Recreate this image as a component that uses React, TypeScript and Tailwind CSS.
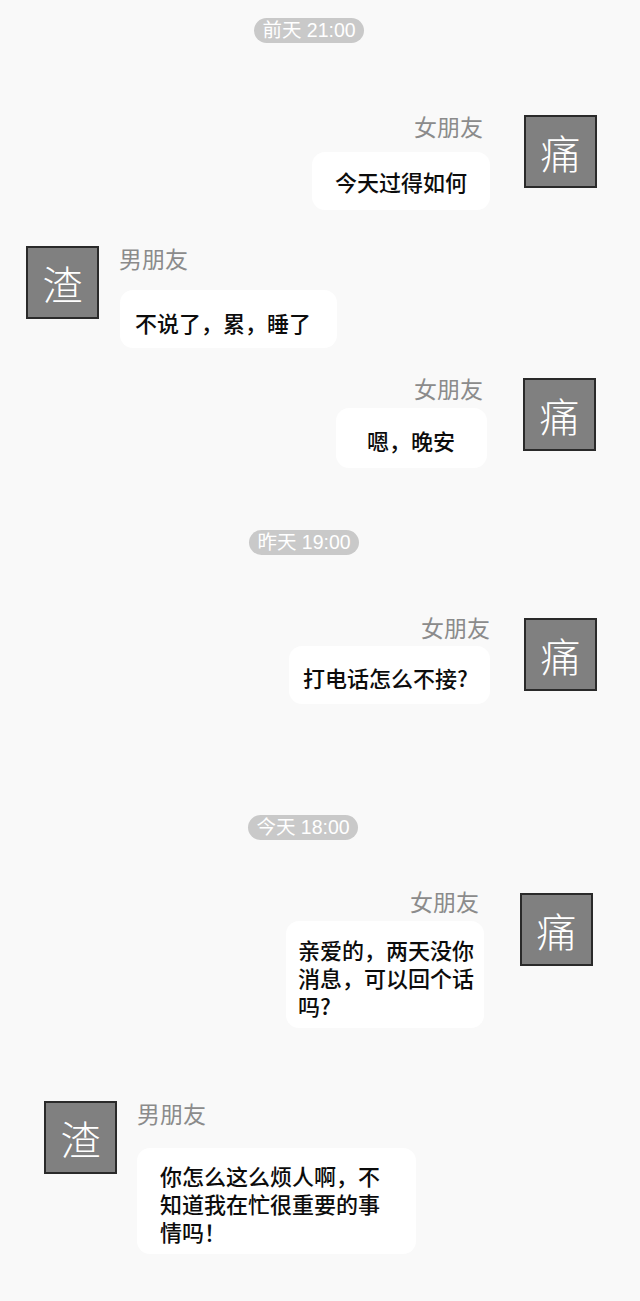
const cjk = "font-['Noto_Sans_CJK_SC','Noto_Sans',sans-serif]";

type MessageProps = {
  side: 'left' | 'right';
  name: string;
  lines: string[];
  rowClass: string;
  nameClass: string;
  bubbleClass: string;
};

function Pill({ label, className }: { label: string; className: string }) {
  return (
    <div
      className={`flex h-[25px] w-[110px] items-center justify-center rounded-full bg-[#c9c9c9] font-['Liberation_Sans','Noto_Sans_CJK_SC',sans-serif] text-[19.5px] leading-none text-white ${className}`}
    >
      {label}
    </div>
  );
}

function Avatar({ glyph }: { glyph: string }) {
  return (
    <div className="flex h-[73px] w-[73px] shrink-0 items-center justify-center border-2 border-[#2a2a2a] bg-[#808080] text-[40px] leading-none font-light text-white">
      {glyph}
    </div>
  );
}

function Message({ side, name, lines, rowClass, nameClass, bubbleClass }: MessageProps) {
  const right = side === 'right';
  return (
    <div className={`flex items-start ${right ? 'justify-end' : 'justify-start'} ${rowClass}`}>
      {!right && <Avatar glyph="渣" />}
      <div className={`flex flex-col ${right ? 'items-end' : 'items-start'}`}>
        <div className={`text-[23px] leading-[24px] text-[#8b8b8b] ${nameClass}`}>{name}</div>
        <div
          className={`flex flex-col justify-center rounded-[13px] bg-white text-[22px] leading-[28px] font-medium whitespace-nowrap text-[#0c0c0c] ${bubbleClass}`}
        >
          {lines.map((line) => (
            <div key={line}>{line}</div>
          ))}
        </div>
      </div>
      {right && <Avatar glyph="痛" />}
    </div>
  );
}

export default function App() {
  return (
    <div className={`flex h-[1301px] w-[640px] flex-col overflow-hidden bg-[#f9f9f9] ${cjk}`}>
      <Pill label="前天 21:00" className="mt-[18px] ml-[254px]" />

      <Message
        side="right"
        name="女朋友"
        lines={['今天过得如何']}
        rowClass="mt-[72px] mr-[43px]"
        nameClass="-mt-[1px] mr-[41px]"
        bubbleClass="mt-[14px] mr-[34px] h-[58px] w-[178px] pl-[23px]"
      />

      <Message
        side="left"
        name="男朋友"
        lines={['不说了，累，睡了']}
        rowClass="mt-[36px] ml-[26px]"
        nameClass="mt-0 ml-[20px]"
        bubbleClass="mt-[20px] ml-[21px] h-[58px] w-[217px] pt-[6px] pl-[15px]"
      />

      <Message
        side="right"
        name="女朋友"
        lines={['嗯，晚安']}
        rowClass="mt-[30px] mr-[44px]"
        nameClass="-mt-[2px] mr-[40px]"
        bubbleClass="mt-[8px] mr-[36px] h-[60px] w-[151px] pt-[4px] pl-[31px]"
      />

      <Pill label="昨天 19:00" className="mt-[62px] ml-[249px]" />

      <Message
        side="right"
        name="女朋友"
        lines={['打电话怎么不接?']}
        rowClass="mt-[63px] mr-[43px]"
        nameClass="-mt-[3px] mr-[34px]"
        bubbleClass="mt-[7px] mr-[34px] h-[58px] w-[201px] pt-[4px] pl-[14px]"
      />

      <Pill label="今天 18:00" className="mt-[111px] ml-[248px]" />

      <Message
        side="right"
        name="女朋友"
        lines={['亲爱的，两天没你', '消息，可以回个话', '吗?']}
        rowClass="mt-[53px] mr-[47px]"
        nameClass="-mt-[4px] mr-[41px]"
        bubbleClass="mt-[8px] mr-[36px] h-[107px] w-[198px] pt-[4px] pl-[12px]"
      />

      <Message
        side="left"
        name="男朋友"
        lines={['你怎么这么烦人啊，不', '知道我在忙很重要的事', '情吗！']}
        rowClass="mt-[73px] ml-[44px]"
        nameClass="mt-0 ml-[20px]"
        bubbleClass="mt-[23px] ml-[20px] h-[106px] w-[279px] pt-[4px] pl-[23px]"
      />
    </div>
  );
}
